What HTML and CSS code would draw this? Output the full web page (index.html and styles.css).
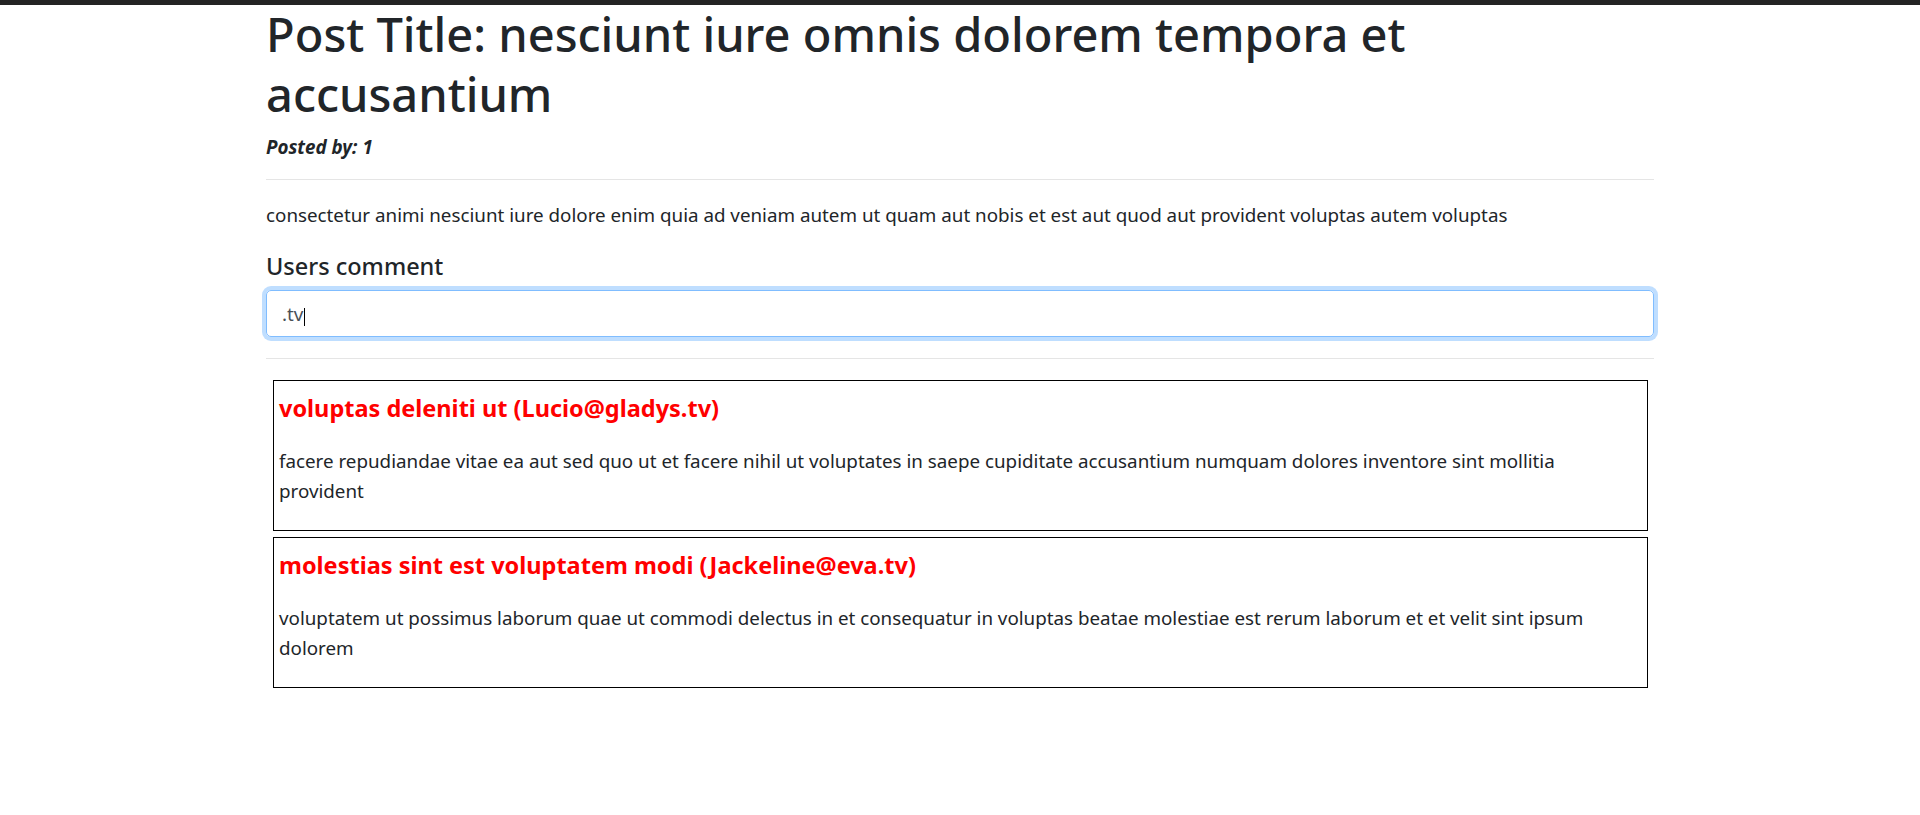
FILE: index.html
```html
<!DOCTYPE html>
<html lang="en">
<head>
<meta charset="utf-8">
<title>Post</title>
<link rel="stylesheet" href="styles.css">
</head>
<body>
<div class="topbar"></div>
<main class="container">
  <h1 class="post-title">Post Title: nesciunt iure omnis dolorem tempora et accusantium</h1>
  <p class="posted-by">Posted by: 1</p>
  <hr class="rule rule-top">
  <p class="post-body">consectetur animi nesciunt iure dolore enim quia ad veniam autem ut quam aut nobis et est aut quod aut provident voluptas autem voluptas</p>
  <h5 class="section-title">Users comment</h5>
  <div class="search-box" role="textbox" aria-label="Filter comments"><span class="search-value">.tv</span><span class="caret"></span></div>
  <hr class="rule rule-bottom">
  <section class="comments">
    <article class="comment">
      <h4 class="comment-title">voluptas deleniti ut (Lucio@gladys.tv)</h4>
      <p class="comment-body">facere repudiandae vitae ea aut sed quo ut et facere nihil ut voluptates in saepe cupiditate accusantium numquam dolores inventore sint mollitia provident</p>
    </article>
    <article class="comment">
      <h4 class="comment-title">molestias sint est voluptatem modi (Jackeline@eva.tv)</h4>
      <p class="comment-body">voluptatem ut possimus laborum quae ut commodi delectus in et consequatur in voluptas beatae molestiae est rerum laborum et et velit sint ipsum dolorem</p>
    </article>
  </section>
</main>
</body>
</html>
```
FILE: styles.css
```css
* { box-sizing: border-box; }

html, body {
  margin: 0;
  padding: 0;
  background: #fff;
}

body {
  font-family: "Noto Sans", "Open Sans", sans-serif;
  font-size: 18.8px;
  line-height: 30px;
  color: #212529;
}

.topbar {
  position: fixed;
  top: 0;
  left: 0;
  right: 0;
  height: 5px;
  background: #232323;
  z-index: 10;
}

.container {
  width: 1388px;
  margin: 0 auto;
  padding-top: 4px;
}

.post-title {
  margin: 0 0 8px;
  font-size: 47px;
  font-weight: 500;
  line-height: 60px;
}

.posted-by {
  margin: 0;
  font-weight: 700;
  font-style: italic;
}

.rule {
  border: 0;
  border-top: 1px solid rgba(0, 0, 0, 0.1);
  height: 0;
}

.rule-top {
  margin: 17px 0 20px;
}

.post-body {
  margin: 0 0 21px;
}

.section-title {
  margin: 0 0 9px;
  font-size: 23.5px;
  font-weight: 500;
  line-height: 30px;
}

.search-box {
  display: flex;
  align-items: baseline;
  height: 47px;
  padding: 8px 15px 7px;
  border: 1px solid #80bdff;
  border-radius: 5px;
  box-shadow: 0 0 0 4px rgba(0, 123, 255, 0.25);
  color: #495057;
}

.caret {
  display: inline-block;
  width: 1px;
  height: 18px;
  background: #000;
  margin-left: 1px;
  position: relative;
  top: 5px;
}

.rule-bottom {
  margin: 21px 0 21px;
}

.comments {
  display: flex;
  flex-direction: column;
  gap: 6px;
  padding: 0 6px 0 7px;
}

.comment {
  border: 1px solid #000;
  height: 151px;
  padding: 6px 5px 0;
}

.comment-title {
  margin: 6px 0 23px;
  color: #ff0000;
  font-size: 23.5px;
  font-weight: 700;
  line-height: 30px;
}

.comment-body {
  margin: 0;
}
```
